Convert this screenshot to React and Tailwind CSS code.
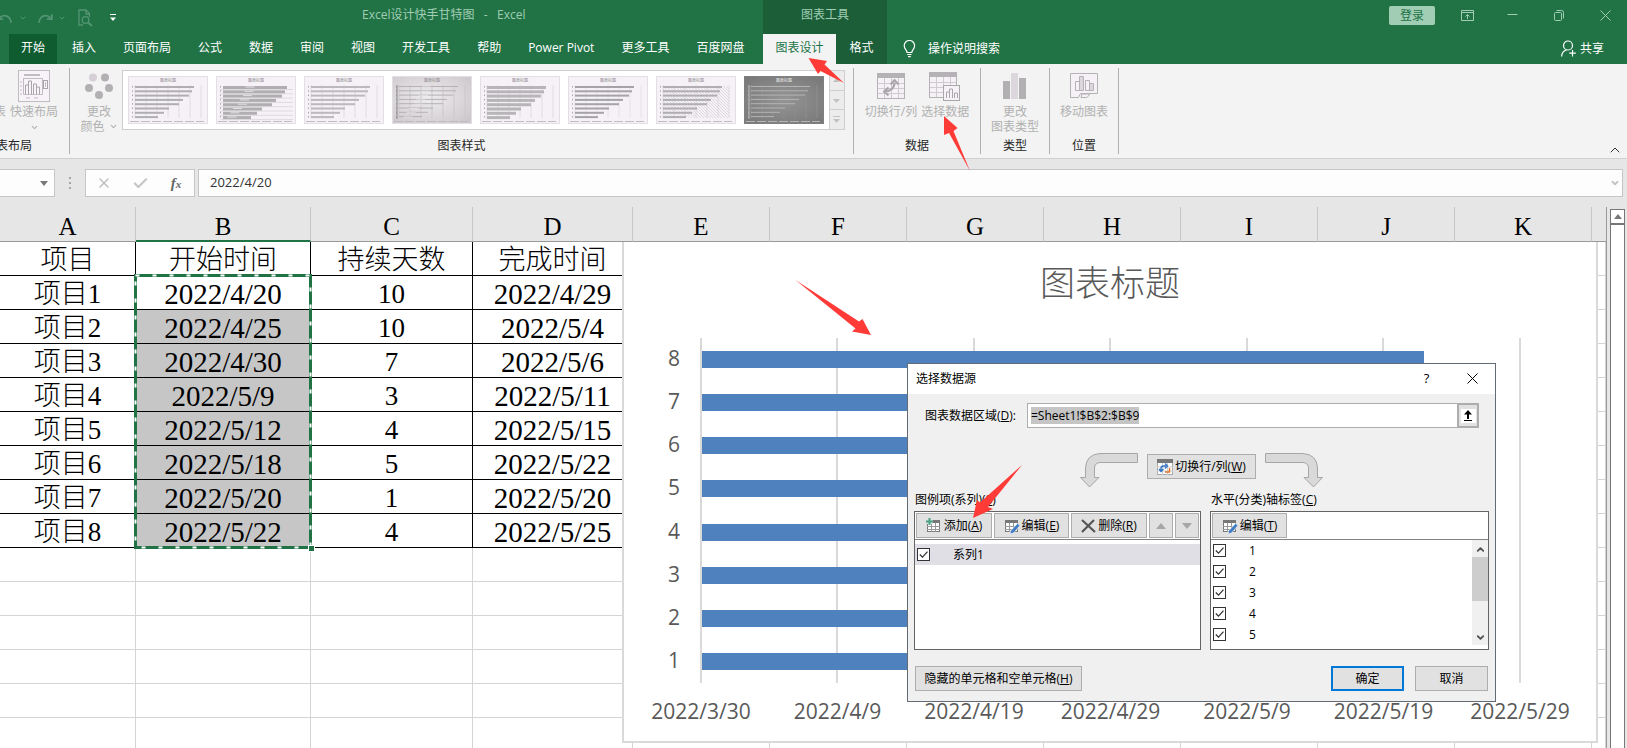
import React from "react";
import { ChevronDown, ChevronUp, X, Check, Undo, Redo } from "lucide-react";

const UI = "font-['Open_Sans','Noto_Sans_CJK_SC',sans-serif]";

const rows = [
  ["项目1", "2022/4/20", "10", "2022/4/29"],
  ["项目2", "2022/4/25", "10", "2022/5/4"],
  ["项目3", "2022/4/30", "7", "2022/5/6"],
  ["项目4", "2022/5/9", "3", "2022/5/11"],
  ["项目5", "2022/5/12", "4", "2022/5/15"],
  ["项目6", "2022/5/18", "5", "2022/5/22"],
  ["项目7", "2022/5/20", "1", "2022/5/20"],
  ["项目8", "2022/5/22", "4", "2022/5/25"],
];
const letters = ["A", "B", "C", "D", "E", "F", "G", "H", "I", "J", "K"];
const tabs = ["插入", "页面布局", "公式", "数据", "审阅", "视图", "开发工具", "帮助", "Power Pivot", "更多工具", "百度网盘"];
const startDays = [53, 51, 49, 43, 40, 31, 26, 21];
const axisDates = ["2022/3/30", "2022/4/9", "2022/4/19", "2022/4/29", "2022/5/9", "2022/5/19", "2022/5/29"];

function PreviewIcon() {
  return (
    <svg width="15" height="18" viewBox="0 0 15 18" fill="none" stroke="#539473" strokeWidth="1.3">
      <path d="M5 16H1V1h7l3.500 3.500V8M8 1v4h3.500" />
      <circle cx="7.500" cy="11" r="3.300" />
      <path d="M10 13.500l4 3.500" strokeWidth="2" />
    </svg>
  );
}

function TitleBar() {
  return (
    <header className="grid grid-cols-[763px_124px_1fr] grid-rows-[36px_28px] bg-[#217346] text-xs text-white">
      <div className="grid grid-cols-[362px_1fr] items-center">
        <div className="flex h-8 items-center text-[#539473]">
          <button aria-label="撤销" className="-ml-1"><Undo size={17} strokeWidth={2.5} /></button>
          <ChevronDown size={8} strokeWidth={3} className="ml-1.5" />
          <button aria-label="恢复" className="ml-2.5"><Redo size={17} strokeWidth={2.5} /></button>
          <ChevronDown size={8} strokeWidth={3} className="ml-1" />
          <button aria-label="打印预览" className="ml-3"><PreviewIcon /></button>
          <button aria-label="自定义快速访问工具栏" className="ml-4">
            <svg width="8" height="8" viewBox="0 0 8 8"><path d="M1 .5h6" stroke="#fff" /><path d="M1 3.500h6L4 7z" fill="#fff" /></svg>
          </button>
        </div>
        <h1 className="-mt-1.5 whitespace-pre text-[#a0cdb3]">Excel设计快手甘特图   -   Excel</h1>
      </div>
      <div className="bg-[#1b5e38] pt-1.5 text-center leading-[18px] text-[#a0cdb3]">图表工具</div>
      <div className="flex items-start justify-end pt-1.5 text-[#a0cdb3]">
        <button className="mr-[26px] h-[19px] w-[46px] rounded-xs bg-[#a0cdb3] leading-4 text-[#217346]">登录</button>
        <button aria-label="功能区显示选项" className="mr-[33px] pt-1">
          <svg width="13" height="11" viewBox="0 0 13 11" fill="none" stroke="currentColor"><path d="M.5 .5h12v10H.500zM.5 2.500h12M6.500 9V4.500M4.500 6.500l2-2 2 2" /></svg>
        </button>
        <button aria-label="最小化" className="mr-9 pt-1">
          <svg width="11" height="11" viewBox="0 0 11 11" stroke="currentColor"><path d="M.5 4.500h10" /></svg>
        </button>
        <button aria-label="还原" className="mr-9 pt-1">
          <svg width="10" height="11" viewBox="0 0 10 11" fill="none" stroke="currentColor"><rect x=".5" y="2.500" width="7" height="8" rx="1" /><path d="M2.500 .5h5a2 2 0 0 1 2 2v6" /></svg>
        </button>
        <button aria-label="关闭" className="mr-4 pt-1">
          <svg width="11" height="11" viewBox="0 0 11 11" stroke="currentColor"><path d="M.5 .5l10 10M10.500 .5l-10 10" /></svg>
        </button>
      </div>
      <nav className="-mt-0.5 flex items-stretch gap-[3px] pl-[9px] leading-6">
        <button className="bg-[#0f5c30] px-3 pb-0.5">开始</button>
        {tabs.map((t) => (
          <button key={t} className="px-3 pb-0.5">{t}</button>
        ))}
      </nav>
      <div className="-mt-0.5 grid grid-cols-[73px_51px] bg-[#1b5e38] leading-6">
        <button className="bg-[#f3f3f3] pb-0.5 text-[#217346]">图表设计</button>
        <button className="pb-0.5">格式</button>
      </div>
      <div className="-mt-0.5 flex items-center justify-between pr-[23px] pb-px pl-4">
        <button className="flex items-center gap-3">
          <svg width="13" height="18" viewBox="0 0 13 18" fill="none" stroke="#fff" strokeWidth="1.200">
            <path d="M4 12.500C4 10 1.200 9 1.200 5.700a5.200 5.200 0 0 1 10.400 0C11.600 9 8.800 10 8.800 12.500zM4.300 14.500h4.200M5 16.700h2.800" />
          </svg>
          操作说明搜索
        </button>
        <button className="flex items-center gap-1">
          <svg width="15" height="17" viewBox="0 0 15 17" fill="none" stroke="#fff" strokeWidth="1.200">
            <circle cx="7" cy="5.500" r="4.500" /><path d="M.6 16.500c.3-4 2.400-6 5-6.500M11.500 10v6.500M8.200 13.200h6.600" />
          </svg>
          共享
        </button>
      </div>
    </header>
  );
}

const thumbs = [
  { bg: "#f5f1f7", bar: "#b0aeb0", h: 2, line: "#e0dce2" },
  { bg: "#f5f1f7", bar: "#b0aeb0", h: 3, line: "#dedade", horizontal: true },
  { bg: "#f5f1f7", bar: "#bbb9bb", h: 2, line: "#e0dce2" },
  { bg: "url(#warm)", bar: "#b5b2b5", h: 1, line: "#cbc8cb", axis: true },
  { bg: "#f5f1f7", bar: "#b8b5b8", h: 3, line: "#e0dce2" },
  { bg: "#f5f1f7", bar: "#a5a3a5", h: 2, line: "#e6e2e8" },
  { bg: "#f5f1f7", bar: "#b0aeb0", h: 2, line: "#e0dce2", hatch: true },
  { bg: "url(#dark)", bar: "#b4b4b4", h: 1, line: "#8e8e8e", axis: true, light: true },
];

function Thumb({ t }) {
  const lens = [59, 57, 54, 48, 44, 34, 29, 23];
  return (
    <svg width="80" height="48" viewBox="0 0 80 48" className="block">
      <defs>
        <radialGradient id="warm" cx=".45" cy=".45" r=".7"><stop offset="0" stopColor="#f0edf0" /><stop offset="1" stopColor="#ccc8cc" /></radialGradient>
        <radialGradient id="dark" cx=".5" cy=".5" r=".7"><stop offset="0" stopColor="#959595" /><stop offset="1" stopColor="#777" /></radialGradient>
        <pattern id="hatch" width="3" height="3" patternUnits="userSpaceOnUse"><path d="M0 0l3 3" stroke="#d4d0d6" strokeWidth=".7" /></pattern>
      </defs>
      <rect x=".5" y=".5" width="79" height="47" fill={t.bg} stroke={t.light ? "#808080" : "#e2dee4"} />
      <text x="40" y="5.500" fontSize="4" textAnchor="middle" fill={t.light ? "#eee" : "#8c8a8c"}>图表标题</text>
      {t.horizontal
        ? lens.map((_, i) => <path key={i} d={`M4 ${13.500 + i * 4.300}h73`} stroke={t.line} />)
        : [7, 18, 29, 40, 51, 62, 73].map((x) => <path key={x} d={`M${x} 9v33`} stroke={t.line} />)}
      {t.hatch && <rect x="7" y="10" width="66" height="32" fill="url(#hatch)" />}
      {lens.map((l, i) => (
        <g key={i}>
          <rect x="7" y={10 + i * 4.300} width={l + (t.horizontal ? 5 : 0)} height={t.h} fill={t.bar} />
          {(t.horizontal || (t.axis && !t.light)) && <rect x={l / 2} y={10.500 + i * 4.300} width="9" height="1" fill="#e2e0e2" />}
          <rect x="4" y={10 + i * 4.300} width="1" height="1.500" fill="#a8a6a8" />
        </g>
      ))}
      {t.axis && <path d="M5 9v34" stroke={t.light ? "#bbb" : "#888"} />}
      <path d="M2 45.500h74" stroke={t.light ? "#b5b5b5" : "#bfbcc0"} strokeDasharray="9 2" />
    </svg>
  );
}

function GridGlyph({ color = "#b5b2b5", bg = "#f5f1f7" }) {
  return (
    <g>
      <rect x=".5" y=".5" width="27" height="25" fill={bg} stroke={color} />
      <rect x="0" y="0" width="28" height="5" fill={color} />
      <path d="M7.500 5v20M14.500 5v20M21.500 5v20M1 10.500h26M1 15.500h26M1 20.500h26" stroke="#cfccd0" />
    </g>
  );
}

function Group({ label, className, children }) {
  return (
    <section className={"flex flex-col border-r border-[#b1b1b1] " + className}>
      <div className="flex h-[70px] shrink-0 justify-center">{children}</div>
      <div className="text-center leading-4 text-[#262626]">{label}</div>
    </section>
  );
}

function BigButton({ icon, children, className = "" }) {
  return (
    <button className={"flex flex-col items-center text-[#b1b1b1] leading-[15px] whitespace-nowrap " + className}>
      <span className="flex h-9 items-center">{icon}</span>
      {children}
    </button>
  );
}

function Ribbon() {
  return (
    <div className="flex h-[95px] items-stretch border-b border-[#d0d0d0] bg-[#f3f3f3] pt-1 pb-1 text-xs">
      <section className="flex w-[70px] flex-col border-r border-[#b1b1b1]">
        <div className="flex h-[70px] shrink-0 items-start">
          <div className="flex w-2.5 justify-end overflow-hidden pt-9 pr-1 leading-[15px] whitespace-nowrap text-[#b1b1b1]">表</div>
          <BigButton
            icon={
              <svg width="32" height="32" viewBox="0 0 32 32" fill="none" stroke="#c0bcc2">
                <rect x=".5" y=".5" width="31" height="31" fill="#f7f3f9" />
                <path d="M6 5h16" strokeWidth="2" />
                <path d="M5.500 8v16.500h19V8.500h-19M2 12h2M2 16h2M2 20h2M2 24h2M8 28h4M16 28h4" />
                <path d="M7.500 24V15h3v9M10.500 24V11h3v13M15.500 24V14h3v10M18.500 24v-7h3v7" stroke="#a8a6a8" />
                <rect x="25.500" y="10.500" width="4" height="8" stroke="#a8a6a8" /><path d="M27.500 12v5" />
              </svg>
            }
          >
            快速布局
            <ChevronDown size={9} strokeWidth={3} className="mt-1" />
          </BigButton>
        </div>
        <div className="flex w-8 justify-end overflow-hidden leading-4 whitespace-nowrap text-[#262626]">图表布局</div>
      </section>

      <Group label="图表样式" className="w-[784px]">
        <BigButton
          className="w-[51px] pl-1.5"
          icon={
            <svg width="28" height="27" viewBox="0 0 28 27" fill="#b3b0b3">
              <circle cx="8" cy="4.500" r="4" fill="#d6d0d6" /><circle cx="20" cy="4.500" r="4" /><circle cx="4" cy="15" r="4" /><circle cx="24" cy="15" r="4" /><circle cx="14" cy="22" r="4" />
            </svg>
          }
        >
          <span>更改</span>
          <span className="flex items-center gap-1">颜色<ChevronDown size={9} strokeWidth={3} /></span>
        </BigButton>
        <div className="mt-0.5 flex h-[60px] border border-[#cfcfcf] bg-white">
          <div className="flex items-center gap-2 px-[5px]">
            {thumbs.map((t, i) => (
              <button key={i} aria-label={"样式 " + (i + 1)}><Thumb t={t} /></button>
            ))}
          </div>
          <div className="flex w-[15px] flex-col divide-y divide-[#cfcfcf] border-l border-[#cfcfcf] bg-[#ececec]">
            {["M1 6l3.500-4L8 6z", "M1 3l3.500 4L8 3z", "M1 4l3.500 4L8 4zM1 1h7v1H1z"].map((d, i) => (
              <button key={i} aria-label={["上一行", "下一行", "更多"][i]} className="flex flex-1 items-center justify-center">
                <svg width="9" height="9" viewBox="0 0 9 9" fill="#c2c2c2"><path d={d} /></svg>
              </button>
            ))}
          </div>
        </div>
        <div className="w-2" />
      </Group>

      <Group label="数据" className="w-[127px]">
        <BigButton
          className="mr-1"
          icon={
            <svg width="28" height="26" viewBox="0 0 28 26"><GridGlyph />
              <path d="M8 18.500c5.500 0 9.500-3.500 9.500-9" fill="none" stroke="#aaa7aa" strokeWidth="2.200" />
              <path d="M13.500 11.500l4-4.500 4 4.500M11.500 14.500l-4.500 4 4.500 4" fill="none" stroke="#aaa7aa" strokeWidth="2" />
            </svg>
          }
        >切换行/列</BigButton>
        <BigButton
          icon={
            <svg width="32" height="29" viewBox="0 0 32 29"><GridGlyph />
              <rect x="14.500" y="13.500" width="16" height="15" fill="#f5f1f7" stroke="#aaa7aa" />
              <path d="M17.500 26v-6h3v6M20.500 26v-9h3v9M25.500 26v-5h3v5" fill="none" stroke="#aaa7aa" />
            </svg>
          }
        >选择数据</BigButton>
      </Group>
      <Group label="类型" className="w-[69px]">
        <BigButton icon={<svg width="24" height="26" viewBox="0 0 24 26" fill="#b3b0b3"><path d="M0 8h7v18H0zM16 5h7v21h-7z" /><path d="M8 0h7v26H8z" fill="#dcd7dc" /></svg>}>
          <span>更改</span>
          <span>图表类型</span>
        </BigButton>
      </Group>
      <Group label="位置" className="w-[69px]">
        <BigButton
          icon={
            <svg width="28" height="26" viewBox="0 0 28 26" fill="none" stroke="#b5b2b5">
              <path d="M.5 24.500V.5h27v20h-17l-2 4z" fill="#f5f1f7" />
              <path d="M5.500 17.500v-9h4v9zM15.500 17.500V7.500h4v10z" /><path d="M9.500 17.500v-14h4v14zM19.500 17.500v-7h4v7z" fill="#dcd7dc" />
              <path d="M11 24.500h6l3-3.500h-8z" />
            </svg>
          }
        >移动图表</BigButton>
      </Group>
      <div className="flex flex-1 items-end justify-end pr-1">
        <button aria-label="折叠功能区" className="-mb-1"><ChevronUp size={16} strokeWidth={1.5} className="text-[#333]" /></button>
      </div>
    </div>
  );
}

function FormulaBar() {
  return (
    <div className="flex h-12 items-start bg-[#e6e6e6] pt-2.5 pr-1 text-xs">
      <div className="flex h-7 w-[55px] items-center justify-end border border-l-0 border-[#c6c6c6] bg-[#fdfdfd] pr-1.5">
        <button aria-label="名称框" className="flex"><svg width="8" height="5" viewBox="0 0 8 5"><path d="M0 0h8L4 5z" fill="#777" /></svg></button>
      </div>
      <svg width="30" height="28" viewBox="0 0 30 28" fill="#a6a6a6"><path d="M14 8h2v2h-2zM14 13h2v2h-2zM14 18h2v2h-2z" /></svg>
      <div className="grid h-7 w-[110px] grid-cols-3 items-center justify-items-center border border-[#c6c6c6] bg-[#fdfdfd]">
        <button aria-label="取消输入"><X size={16} className="text-[#bdbdbd]" /></button>
        <button aria-label="确认输入"><Check size={17} strokeWidth={3} className="text-[#c6c6c6]" /></button>
        <button aria-label="插入函数" className="font-['Liberation_Serif',serif] text-[15px] font-bold leading-5 text-[#666] italic">f<span className="text-[11px]">x</span></button>
      </div>
      <input aria-label="编辑栏" defaultValue="2022/4/20" className="ml-[3px] h-7 flex-1 border border-r-0 border-[#c6c6c6] bg-[#fdfdfd] pb-0.5 pl-[11px] text-[13px] text-[#333] outline-none" />
      <button aria-label="展开编辑栏" className="flex h-7 w-4 items-center justify-center border border-l-0 border-[#c6c6c6] bg-[#fdfdfd]">
        <ChevronDown size={10} strokeWidth={5} className="text-[#c6c6c6]" />
      </button>
    </div>
  );
}

function Sheet() {
  return (
    <table className="w-full table-fixed border-separate border-spacing-0 bg-white font-['Liberation_Serif','Noto_Sans_CJK_SC',serif] text-[27px] font-light text-black">
      <colgroup>
        <col className="w-[136px]" /><col className="w-[175px]" /><col className="w-[162px]" /><col className="w-[160px]" />
        {letters.slice(4).map((l) => <col key={l} className="w-[137px]" />)}
        <col />
      </colgroup>
      <thead>
        <tr className="h-[35px]">
          {letters.map((l) => (
            <th key={l} className={"border-r border-r-[#c6c6c6] bg-[#e6e6e6] p-0 pt-1.5 align-middle text-[25px] leading-[26px] font-normal " + (l === "B" ? "border-b-2 border-b-[#217346]" : "border-b border-b-[#999]")}>{l}</th>
          ))}
          <th className="border-b border-[#999] bg-[#e6e6e6] p-0" />
        </tr>
      </thead>
      <tbody>
        {[["项目", "开始时间", "持续天数", "完成时间"], ...rows].map((r, i) => (
          <tr key={i} className="h-[34px]">
            {r.map((c, j) => (
              <td key={j} className={"border-r border-b border-black p-0 pt-[3px] text-center leading-[30px] whitespace-nowrap " + (j === 1 && i > 1 ? "bg-[#c6c6c6] " : "") + (i > 0 && j % 2 ? "text-[29px]" : "")}>{c}</td>
            ))}
            {Array.from({ length: 8 }, (_, j) => <td key={j} className="border-r border-b border-[#d4d4d4] p-0" />)}
          </tr>
        ))}
        {Array.from({ length: 6 }, (_, i) => (
          <tr key={i} className="h-[34px]">
            {Array.from({ length: 12 }, (_, j) => <td key={j} className="border-r border-b border-[#d4d4d4] p-0" />)}
          </tr>
        ))}
      </tbody>
    </table>
  );
}

function Chart() {
  return (
    <figure className="absolute top-[35px] left-[622px] h-[501px] w-[976px] border-2 border-t-0 border-[#d9d9d9] bg-white">
      <figcaption className="pt-3.5 pb-0.5 text-center font-['Noto_Sans_CJK_SC',sans-serif] text-[35px] leading-[50px] font-light text-[#595959]">图表标题</figcaption>
      <svg width="972" height="420" viewBox="624 308 972 420" className="block font-['Open_Sans',sans-serif]" fill="#595959" fontSize="21">
        {axisDates.map((d, i) => (
          <g key={d}>
            <rect x={Math.floor(700 + i * 136.5)} y="338" width="2" height="345" fill="#d9d9d9" />
            <text x={701 + i * 136.500} y="719" textAnchor="middle">{d}</text>
          </g>
        ))}
        {startDays.map((n, i) => (
          <g key={i}>
            <rect x="702" y={Math.round(351 + i * 43.15)} width={Math.round(n * 13.62)} height="17" fill="#4e81bd" />
            <text x="674" y={Math.round(366 + i * 43.15)} textAnchor="middle">{8 - i}</text>
          </g>
        ))}
      </svg>
    </figure>
  );
}

function SmallGrid({ children }) {
  return (
    <svg width="16" height="16" viewBox="0 0 16 16" className="shrink-0">
      <rect x="1.500" y="2.500" width="12" height="11" fill="#fff" stroke="#777" />
      <rect x="1" y="2" width="13" height="3" fill="#777" />
      <path d="M5.500 5v9M9.500 5v9M1 8.500h13M1 11.500h13" stroke="#999" />
      {children}
    </svg>
  );
}
const Pencil = () => <path d="M13.500 5.500l2.500 2L9.500 15l-3.500 1 .8-3.300z" fill="#3f7cc4" stroke="#fff" strokeWidth=".6" />;

function DButton({ children, className = "", label }) {
  return (
    <button aria-label={label} className={"flex h-[25px] items-center justify-center gap-0.5 border border-[#adadad] bg-[#e1e1e1] whitespace-nowrap " + className}>
      {children}
    </button>
  );
}

function CheckRow({ label, className = "" }) {
  return (
    <label className={"flex h-[21px] items-center pl-0.5 " + className}>
      <span className="relative flex">
        <input type="checkbox" defaultChecked className="h-[13px] w-[13px] appearance-none border border-[#333] bg-white" />
        <svg width="13" height="13" viewBox="0 0 13 13" className="pointer-events-none absolute inset-0" fill="none" stroke="#333" strokeWidth="1.200"><path d="M2.800 6.500l2.700 2.700 5-5.500" /></svg>
      </span>
      <span className="ml-[23px]">{label}</span>
    </label>
  );
}

function CurvedArrow({ flip }) {
  return (
    <svg width="58" height="35" viewBox="0 0 58 35" className={flip ? "-scale-x-100" : ""}>
      <path d="M57.500 .5v9H20Q14.500 10 14.500 15v9.500H19L9.500 34 .5 24.500h5V15Q6 1.500 20 .5z" fill="#d9d9d9" stroke="#a6a6a6" />
    </svg>
  );
}

function Dialog() {
  return (
    <div role="dialog" aria-labelledby="dlg-title" className="absolute top-[363px] left-[907px] flex w-[589px] flex-col border border-[#646b75] bg-[#f0f0f0] pb-2.5 text-xs text-black">
      <div className="flex h-[30px] items-center bg-white pl-2">
        <h2 id="dlg-title" className="flex-1">选择数据源</h2>
        <button aria-label="帮助" className="w-[45px] text-[13px]">?</button>
        <button aria-label="关闭" className="flex w-[46px] justify-center pb-0.5">
          <svg width="11" height="11" viewBox="0 0 11 11" stroke="#000"><path d="M.5 .5l10 10M10.500 .5l-10 10" /></svg>
        </button>
      </div>
      <div className="flex flex-col px-1.5 pt-[9px]">
        <div className="flex items-center pr-2.5 pl-[11px]">
          <label htmlFor="range" className="w-[102px]">图表数据区域(<u>D</u>):</label>
          <div className="flex h-[25px] flex-1 items-center border border-r-0 border-[#adadad] bg-white pl-[3px]">
            <input id="range" defaultValue="=Sheet1!$B$2:$B$9" className="h-[17px] bg-[#c5c5c5] [field-sizing:content] outline-none" />
          </div>
          <button aria-label="折叠对话框" className="flex h-[25px] w-[22px] items-center justify-center border-2 border-[#adadad] bg-[#e1e1e1]">
            <svg width="15" height="14" viewBox="0 0 15 14"><rect width="15" height="14" fill="#fff" /><path d="M7 1l4 4.500H8V10H6V5.500H3zM3 11h8v1H3z" /></svg>
          </button>
        </div>
        <div className="mt-[25px] flex justify-center gap-[9px]">
          <CurvedArrow />
          <DButton className="mt-px w-[109px]">
            <svg width="16" height="16" viewBox="0 0 16 16">
              <rect x=".5" y=".5" width="15" height="15" fill="#fff" stroke="#aaa" /><rect width="16" height="4" fill="#777" />
              <path d="M5.500 4v12M10.500 4v12M0 8h16M0 12h16" stroke="#ccc" />
              <path d="M4 11.500V9.500Q4 7 6.500 7H9M2 10l2 2.500L6.500 10M8 4.500L10.500 7 8 9.500" fill="none" stroke="#2f72c4" strokeWidth="1.400" />
              <path d="M12.500 9v4H8" fill="none" stroke="#e8762d" strokeWidth="1.500" />
            </svg>
            <span>切换行/列(<u>W</u>)</span>
          </DButton>
          <CurvedArrow flip />
        </div>
        <div className="grid grid-cols-[287px_1fr] gap-x-[9px]">
          <h3 className="pl-px leading-[23px]">图例项(系列)(<u>S</u>)</h3>
          <h3 className="pl-px leading-[23px]">水平(分类)轴标签(<u>C</u>)</h3>
          <div className="h-[139px] border border-[#646464] bg-white">
            <div className="flex h-[28px] gap-0.5 border-b border-[#828282] p-px">
              <DButton className="w-[76px]"><SmallGrid><path d="M0 0h7v6H0z" fill="#e1e1e1" /><path d="M3.500 0v7M0 3.500h7" stroke="#4aa083" strokeWidth="2" /></SmallGrid><span>添加(<u>A</u>)</span></DButton>
              <DButton className="w-[75px]"><SmallGrid><Pencil /></SmallGrid><span>编辑(<u>E</u>)</span></DButton>
              <DButton className="w-[76px]"><svg width="15" height="14" viewBox="0 0 15 14" stroke="#555" strokeWidth="2.200"><path d="M1 1l13 12M13 1L1 13" /></svg><span>删除(<u>R</u>)</span></DButton>
              <DButton label="上移" className="w-6"><svg width="10" height="6" viewBox="0 0 10 6" fill="#a6a6a6"><path d="M5 0l5 6H0z" /></svg></DButton>
              <DButton label="下移" className="w-6"><svg width="10" height="6" viewBox="0 0 10 6" fill="#a6a6a6"><path d="M5 6l5-6H0z" /></svg></DButton>
            </div>
            <CheckRow label="系列1" className="mt-1 bg-[#dfdfe5]" />
          </div>
          <div className="flex h-[139px] flex-col border border-[#646464] bg-white">
            <div className="flex h-[28px] shrink-0 border-b border-[#828282] p-px">
              <DButton className="w-[75px]"><SmallGrid><Pencil /></SmallGrid><span>编辑(<u>T</u>)</span></DButton>
            </div>
            <div className="flex min-h-0 flex-1">
              <div className="flex-1">
                {[1, 2, 3, 4, 5].map((n) => <CheckRow key={n} label={n} />)}
              </div>
              <div className="flex h-[105px] w-4 flex-col items-center bg-[#f0f0f0] text-[#505050]">
                <ChevronUp size={11} strokeWidth={4} className="mt-1 shrink-0" />
                <div className="mt-0.5 mb-auto h-11 w-full bg-[#cdcdcd]" />
                <ChevronDown size={11} strokeWidth={4} className="mb-0.5 shrink-0" />
              </div>
            </div>
          </div>
        </div>
        <div className="mt-4 flex pr-px">
          <DButton className="ml-px w-[167px]"><span>隐藏的单元格和空单元格(<u>H</u>)</span></DButton>
          <button className="mr-[11px] ml-auto h-[25px] w-[73px] border-2 border-[#0078d7] bg-[#e1e1e1]">确定</button>
          <DButton className="w-[73px]">取消</DButton>
        </div>
      </div>
    </div>
  );
}

export default function App() {
  return (
    <div className={"relative flex h-screen flex-col overflow-hidden bg-[#e6e6e6] " + UI}>
      <TitleBar />
      <Ribbon />
      <FormulaBar />
      <main className="flex min-h-0 flex-1 gap-[3px] pr-[2px]">
        <div className="relative flex-1 overflow-hidden border-r border-[#999]">
          <Sheet />
          <svg width="182" height="282" viewBox="0 0 182 282" className="absolute top-[65px] left-[133px]" fill="none">
            <rect x="2.500" y="3.500" width="175" height="272" stroke="#217346" strokeWidth="3" />
            <rect x="2.500" y="3.500" width="175" height="272" stroke="#fff" strokeWidth="2" strokeDasharray="4 13" />
            <rect x="175.500" y="273.500" width="6" height="6" fill="#217346" stroke="#fff" />
          </svg>
          <Chart />
        </div>
        <div className="mt-0.5 flex w-[15px] flex-col border border-b-0 border-[#777] bg-white">
          <button aria-label="向上滚动" className="flex h-[15px] shrink-0 items-center justify-center border-b-2 border-[#777]">
            <svg width="8" height="5" viewBox="0 0 8 5"><path d="M4 0l4 5H0z" fill="#777" /></svg>
          </button>
        </div>
      </main>
      <Dialog />
      <svg width="1627" height="748" viewBox="0 0 1627 748" className="pointer-events-none absolute top-0 left-0" fill="#ff3b38">
        <path d="M808.500 58L827 61l-2.500 3.500L844 83l-23.500-12-2.500 3z" />
        <path d="M944 116l13.500 12-4 3L970 171l-21-38-5 2z" />
        <path d="M795.500 280L859 321.500l3.500-2.500L871 335l-19-3.500 3.500-3z" />
        <path d="M973 518l4-18 3 2.500L1022 465l-34 42 5 2z" />
      </svg>
    </div>
  );
}
